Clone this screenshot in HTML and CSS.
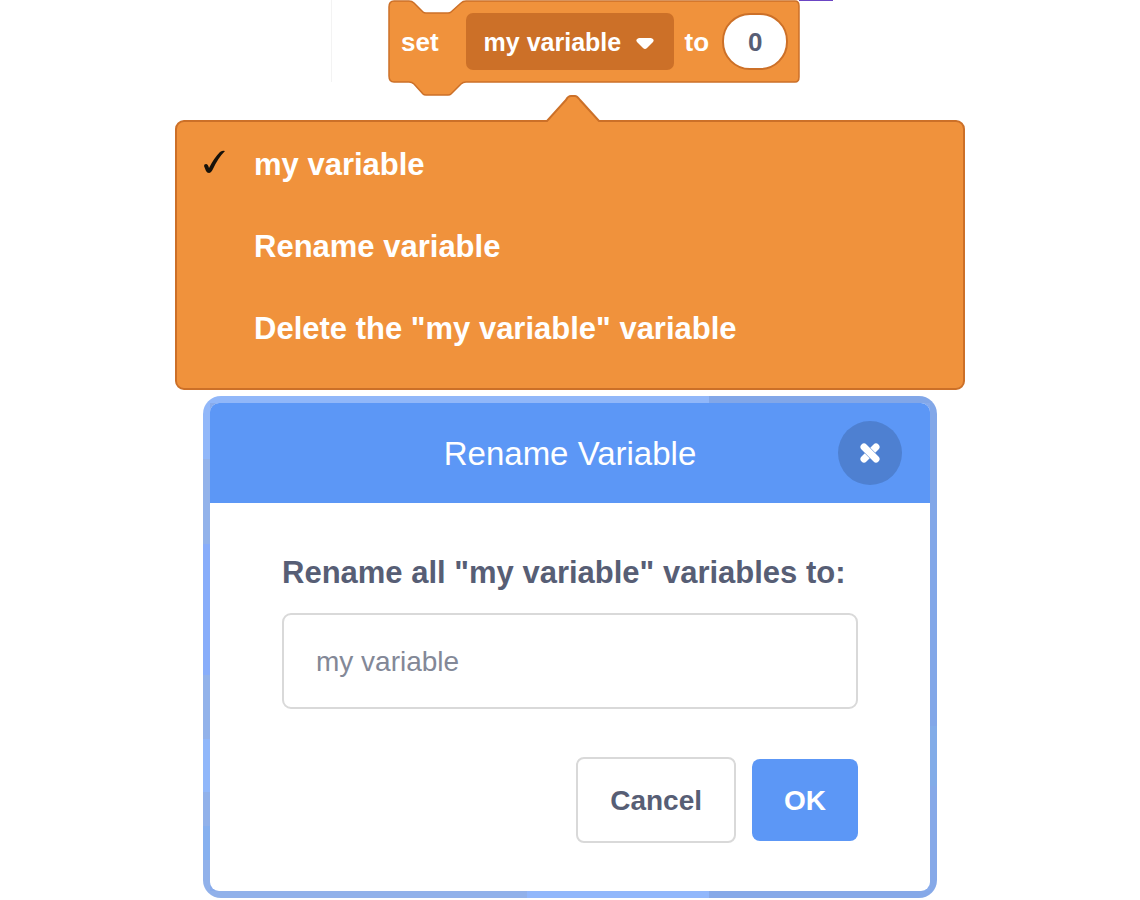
FILE: index.html
```
<!DOCTYPE html>
<html lang="en">
<head>
    <meta charset="UTF-8">
    <meta name="viewport" content="width=device-width, initial-scale=1.0">
    <title>Rename Variable</title>
    <link rel="stylesheet" href="styles.css">
</head>
<body>
    <main class="workspace">
        <div class="block-row">
            <div class="block">
                <svg class="block-shape" viewBox="0 0 446 97" aria-hidden="true">
                    <path class="block-outline" d="M1 7Q1 1 6 1H21Q24 1 26 3L35 12Q36 13 38 13H60Q62 13 63 12L73 3Q75 1 78 1H407Q411 1 411 6V77Q411 82 407 82H78Q75 82 73 84L63 94Q62 95 60 95H38Q36 95 35 94L26 84Q24 82 21 82H6Q1 82 1 76Z"/>
                    <path class="neighbour-block" d="M411 0H445"/>
                </svg>
                <span class="block-label set-label">set</span>
                <div class="variable-select">
                    <select aria-label="Variable">
                        <option>my variable</option>
                    </select>
                    <svg class="select-arrow" viewBox="0 0 18 12" aria-hidden="true">
                        <path d="M3 0H15Q19 1 17 4L11 10Q9 12 7 10L1 4Q-1 1 3 0Z"/>
                    </svg>
                </div>
                <span class="block-label">to</span>
                <input class="value-input" type="text" value="0" aria-label="Value">
            </div>
        </div>

        <div class="menu">
            <svg class="menu-pointer" viewBox="0 0 54 28" aria-hidden="true">
                <path class="pointer-fill" d="M1 28V26L20 4Q27 -2 33 4L53 26V28Z"/>
                <path class="pointer-line" d="M0 26H1L20 5Q22 1 25 1H29Q31 1 34 5L53 26H54"/>
            </svg>
            <button class="menu-item" type="button">
                <svg class="check" viewBox="0 0 24 26" aria-hidden="true">
                    <path d="M2 17Q2 15 4 15Q6 15 7 19Q12 9 18 3Q21 1 23 2Q16 9 11 20Q9 24 7 24Q5 24 4 22Z"/>
                </svg>
                my variable
            </button>
            <button class="menu-item" type="button">Rename variable</button>
            <button class="menu-item" type="button">Delete the "my variable" variable</button>
        </div>

        <div class="dialog-frame">
            <form class="dialog" role="dialog" aria-labelledby="dialog-title">
                <header class="dialog-header">
                    <h1 id="dialog-title">Rename Variable</h1>
                    <button class="close-btn" type="button" aria-label="Close">
                        <svg viewBox="0 0 20 20" aria-hidden="true">
                            <path d="M4 16L16 4"/>
                            <path class="cross-gap" d="M7 7L13 13"/>
                            <path d="M4 4L16 16"/>
                        </svg>
                    </button>
                </header>
                <div class="dialog-body">
                    <label for="new-name">Rename all "my variable" variables to:</label>
                    <input class="name-input" id="new-name" type="text" value="my variable">
                    <div class="dialog-actions">
                        <button class="btn cancel-btn" type="button">Cancel</button>
                        <button class="btn ok-btn" type="submit">OK</button>
                    </div>
                </div>
            </form>
        </div>
    </main>
</body>
</html>
```

FILE: styles.css
```
:root {
    --orange: #f0923c;
    --orange-dark: #cc7028;
    --blue: #5c97f6;
    --text-color: #575e75;
    --border-color: #d9d9d9;
}

* {
    margin: 0;
    padding: 0;
    box-sizing: border-box;
}

body {
    font-family: "Liberation Sans", Arial, sans-serif;
    background: #fff;
    color: var(--text-color);
}

button, input, select {
    font-family: inherit;
}

button {
    cursor: pointer;
}

.workspace {
    max-width: 790px;
    margin: 0 auto;
}

/* "set variable" block */
.block-row {
    display: flex;
    margin-left: 156px;
    padding: 0 0 38px 56px;
    border-left: 1px solid #f7f7f7;
    border-image: linear-gradient(#f3f3f3 82px, transparent 82px) 1;
}

.block {
    position: relative;
    display: flex;
    align-items: center;
    flex-shrink: 0;
    height: 82px;
    padding: 1px 13px 0 13px;
}

.block-shape {
    position: absolute;
    top: 0;
    left: 0;
    width: 446px;
    height: 97px;
    z-index: -1;
}

.block-outline {
    fill: var(--orange);
    stroke: var(--orange-dark);
    stroke-width: 1.5;
}

.neighbour-block {
    stroke: #6b45c4;
    stroke-width: 2;
}

.block-label {
    padding-top: 2px;
    color: #fff;
    font-size: 26px;
    font-weight: bold;
    margin-right: 13px;
}

.set-label {
    margin-right: 27px;
}

.variable-select {
    position: relative;
    margin-right: 11px;
}

.variable-select select {
    appearance: none;
    display: block;
    width: 208px;
    height: 57px;
    padding: 0 0 0 18px;
    border: none;
    border-radius: 7px;
    background: var(--orange-dark);
    color: #fff;
    font-size: 25px;
    font-weight: bold;
}

.select-arrow {
    position: absolute;
    right: 20px;
    top: 25px;
    width: 18px;
    height: 12px;
    fill: #fff;
    pointer-events: none;
}

.value-input {
    width: 66px;
    height: 57px;
    padding-top: 2px;
    border: 2px solid var(--orange-dark);
    border-radius: 28px;
    background: #fff;
    color: var(--text-color);
    font-size: 26px;
    font-weight: bold;
    text-align: center;
}

/* Variable menu */
.menu {
    position: relative;
    padding: 2px 0 18px;
    border: 2px solid var(--orange-dark);
    border-radius: 9px;
    background: var(--orange);
}

.menu-pointer {
    position: absolute;
    top: -27px;
    left: 369px;
    width: 54px;
    height: 28px;
}

.pointer-fill {
    fill: var(--orange);
}

.pointer-line {
    fill: none;
    stroke: var(--orange-dark);
    stroke-width: 2;
}

.menu-item {
    position: relative;
    display: block;
    width: 100%;
    min-height: 82px;
    padding-left: 77px;
    border: none;
    background: none;
    color: #fff;
    font-size: 31px;
    font-weight: bold;
    text-align: left;
}

.check {
    position: absolute;
    left: 25px;
    top: 25px;
    width: 24px;
    height: 26px;
    fill: #17120a;
}

/* Rename dialog, the frame shows the editor tinted behind it */
.dialog-frame {
    max-width: 734px;
    margin: 6px auto 0;
    padding: 7px;
    border-radius: 18px;
    background:
        linear-gradient(90deg, #91b7f9 506px, #82a7e8 506px) top / 100% 7px no-repeat,
        linear-gradient(90deg, #91b1ea 324px, #91b7fb 324px 506px, #86a9e8 506px) bottom / 100% 7px no-repeat,
        linear-gradient(#91b7f9 63px, #92b2ea 63px 148px, #88adfa 148px 279px, #92b2ea 279px 343px, #90b7fa 343px 396px, #91b1ea 396px 430px, #86b0ef 430px 464px, #91b1ea 464px) left / 7px 100% no-repeat,
        linear-gradient(#82a7e8 330px, #82ace8 330px 390px, #86a9e8 390px) right / 7px 100% no-repeat,
        #88abeb;
}

.dialog {
    overflow: hidden;
    border-radius: 9px;
    background: #fff;
}

.dialog-header {
    display: grid;
    grid-template-columns: 1fr auto 1fr;
    align-items: center;
    min-height: 100px;
    padding: 0 28px;
    background: var(--blue);
}

.dialog-header h1 {
    grid-column: 2;
    padding-top: 2px;
    color: #fff;
    font-size: 33px;
    font-weight: normal;
}

.close-btn {
    display: flex;
    align-items: center;
    justify-content: center;
    justify-self: end;
    width: 64px;
    height: 64px;
    border: none;
    border-radius: 50%;
    background: #4e80d1;
}

.close-btn svg {
    width: 20px;
    height: 20px;
    stroke: #fff;
    stroke-width: 7;
    stroke-linecap: round;
}

.close-btn .cross-gap {
    stroke: #4e80d1;
    stroke-width: 8;
    stroke-linecap: butt;
}

.dialog-body {
    padding: 48px 72px;
}

.dialog-body label {
    display: block;
    margin-bottom: 18px;
    font-size: 31px;
    font-weight: bold;
    line-height: 44px;
}

.name-input {
    display: block;
    width: 100%;
    height: 96px;
    padding: 2px 32px 0;
    border: 2px solid var(--border-color);
    border-radius: 9px;
    background: #fff;
    color: #838897;
    font-size: 28px;
}

.dialog-actions {
    display: flex;
    align-items: center;
    justify-content: flex-end;
    gap: 16px;
    margin-top: 48px;
}

.btn {
    height: 82px;
    padding: 2px 32px 0;
    border: none;
    border-radius: 8px;
    font-size: 28px;
    font-weight: bold;
}

.cancel-btn {
    height: 86px;
    border: 2px solid var(--border-color);
    background: #fff;
    color: var(--text-color);
}

.ok-btn {
    background: var(--blue);
    color: #fff;
}
```
